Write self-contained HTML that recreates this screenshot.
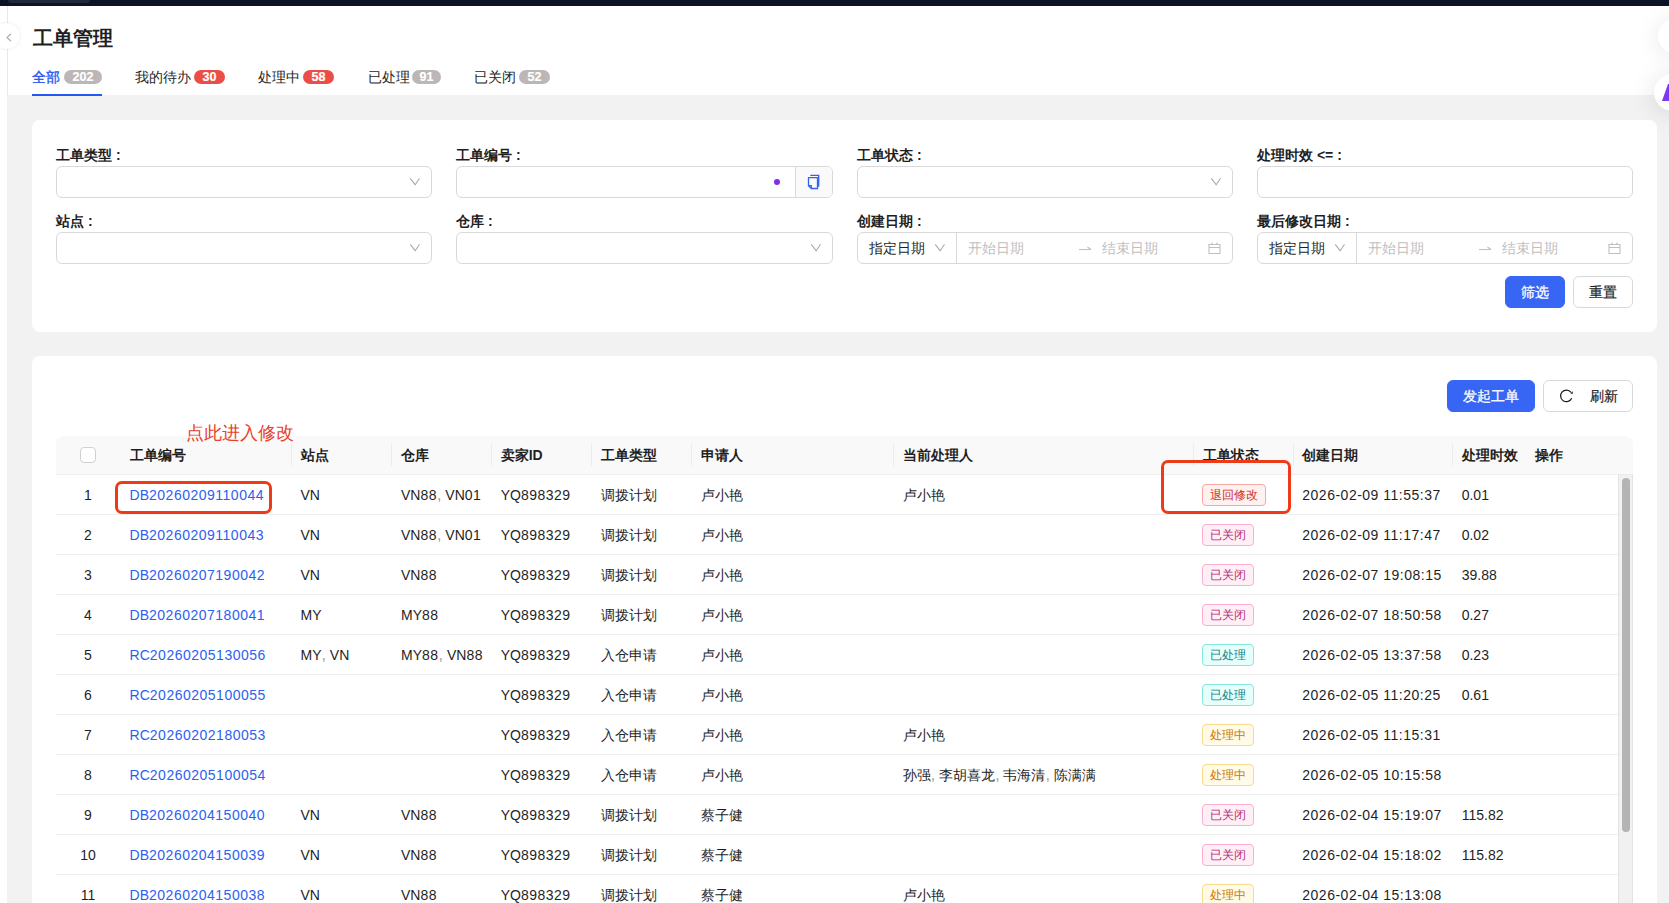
<!DOCTYPE html>
<html><head><meta charset="utf-8">
<style>
*{box-sizing:border-box;margin:0;padding:0}
html,body{width:1669px;height:903px;overflow:hidden;background:#fff;font-family:"Liberation Sans",sans-serif;color:#1f1f1f}
.abs{position:absolute}
#topbar{left:0;top:0;width:1669px;height:6px;background:#0a1426}
#toptab{left:8px;top:0;width:82px;height:3px;background:#1f2938;border-radius:0 0 4px 4px}
#vline{left:7px;top:6px;width:1px;height:89px;background:#e8e8e8}
#gray{left:7px;top:95px;width:1662px;height:808px;background:#f2f2f2}
#collapse{left:-6px;top:22.5px;width:26px;height:26px;border-radius:50%;background:#fff;box-shadow:0 0 3px rgba(0,0,0,.10)}
#collapse svg{position:absolute;left:12px;top:10px}
.title{left:33px;top:25px;font-size:20px;font-weight:bold;color:#1f1f1f;line-height:26px}
.tab{top:68px;font-size:14px;line-height:18px;color:#262626;white-space:nowrap}
.tab.on{color:#2458f5;-webkit-text-stroke:0.35px #2458f5}
.badge{top:70px;height:14px;line-height:14px;border-radius:7px;color:#fff;font-size:12.5px;font-weight:bold;text-align:center;-webkit-text-stroke:0.2px #fff}
.bg{background:#bcb6b6}.br{background:#ea4e46}
#uline{left:32px;top:94px;width:70px;height:2px;background:#2458f5}
.card{background:#fff;border-radius:8px}
#card1{left:32px;top:120px;width:1625px;height:212px}
#card2{left:32px;top:356px;width:1625px;height:560px}
.lbl{font-size:14px;font-weight:bold;line-height:16px;color:#1f1f1f;white-space:nowrap}
.inp{height:32px;width:376px;border:1px solid #d9d9d9;border-radius:6px;background:#fff}
.chev{position:absolute;right:10px;top:10px}
.btn{height:32px;border-radius:6px;font-size:14px;line-height:30px;text-align:center;white-space:nowrap}
.btnp{background:#3766f4;color:#fff;border:1px solid #3766f4;-webkit-text-stroke:0.3px #fff}
.btnd{background:#fff;color:#1f1f1f;border:1px solid #d9d9d9;-webkit-text-stroke:0.2px #1f1f1f}
.ph{position:absolute;top:7px;font-size:14px;line-height:16px;color:#bfbfbf;white-space:nowrap}
.seltxt{position:absolute;top:7px;left:11px;font-size:14px;line-height:16px;color:#1f1f1f;white-space:nowrap}
.thead{left:56px;top:436px;width:1577px;height:39px;background:#f9f9f9;border-radius:8px 8px 0 0;border-bottom:1px solid #efefef}
.cb{left:80px;top:447px;width:16px;height:16px;border:1px solid #d0d0d0;border-radius:4px;background:#fff}
.th{top:446px;font-size:14px;font-weight:bold;line-height:18px;color:#1f1f1f;white-space:nowrap}
.td{font-size:14px;line-height:18px;color:#1f1f1f;white-space:nowrap}
.idx{left:56px;width:64px;text-align:center}
.link{color:#2c60f2}
.cm{color:#a0a0a0;font-size:16px;line-height:0}
.sep{top:444px;width:1px;height:22px;background:#ececec}
.rowline{left:56px;width:1562px;height:1px;background:#efefef}
.tag{height:22px;line-height:20px;font-size:12px;border-radius:4px;border:1px solid;padding:0 7px;white-space:nowrap}
.t-red{color:#cc2f2b;background:#fff1f0;border-color:#f7a8a3}
.t-mag{color:#b82c7c;background:#fff0f6;border-color:#ffadd2}
.t-cyan{color:#17838b;background:#e6fffb;border-color:#87e8de}
.t-gold{color:#c47a12;background:#fffbe6;border-color:#f8da8c}
#sbtrack{left:1618px;top:474px;width:15px;height:429px;background:#f1f1f1;border-left:1px solid #e3e3e3;border-right:1px solid #e3e3e3;border-top:1px solid #ececec}
#sbthumb{left:1622px;top:478px;width:8px;height:354px;background:#b4b4b4;border-radius:4px}
#box1{left:115px;top:481px;width:157px;height:33px;border:3px solid #ee3a17;border-radius:7px}
#box2{left:1161px;top:460px;width:130px;height:54px;border:3px solid #ee3a17;border-radius:7px}
#note{left:185.5px;top:422px;font-size:18.2px;line-height:22px;color:#e8402a;white-space:nowrap}
#fab1{left:1658px;top:18px;width:36px;height:36px;border-radius:50%;background:#fff;box-shadow:0 2px 24px rgba(0,0,0,.10)}
#fab2{left:1654px;top:74px;width:37px;height:37px;border-radius:50%;background:#fff;box-shadow:0 2px 26px rgba(0,0,0,.13)}
#botline{display:none}
.dg{letter-spacing:0.5px}
.co{margin-left:4px}

</style></head>
<body>
<div id="topbar" class="abs"></div>
<div id="toptab" class="abs"></div>
<div id="vline" class="abs"></div>
<div id="gray" class="abs"></div>
<div id="collapse" class="abs"><svg width="6" height="9" viewBox="0 0 6 9"><path d="M5 0.8 L1 4.5 L5 8.2" fill="none" stroke="#b0b0b0" stroke-width="1.2"/></svg></div>
<div class="abs title">工单管理</div>
<div class="abs tab on" style="left:32px">全部</div>
<div class="abs badge bg" style="left:64px;width:38px">202</div>
<div class="abs tab" style="left:134.7px">我的待办</div>
<div class="abs badge br" style="left:194px;width:31px">30</div>
<div class="abs tab" style="left:257.6px">处理中</div>
<div class="abs badge br" style="left:303px;width:31px">58</div>
<div class="abs tab" style="left:367.5px">已处理</div>
<div class="abs badge bg" style="left:412px;width:29px">91</div>
<div class="abs tab" style="left:474.3px">已关闭</div>
<div class="abs badge bg" style="left:519px;width:31px">52</div>
<div id="uline" class="abs"></div>

<div id="card1" class="abs card"></div>
<div class="abs lbl" style="left:56px;top:147px">工单类型<span class="co">:</span></div>
<div class="abs inp" style="left:56px;top:166px"><svg class="chev" width="12" height="9" viewBox="0 0 12 9"><path d="M1.2 1.3 L6.2 7.7 L10.5 1.3" fill="none" stroke="#adadad" stroke-width="1.1"/></svg></div>
<div class="abs lbl" style="left:456px;top:147px">工单编号<span class="co">:</span></div>
<div class="abs inp" style="left:456px;top:166px;width:377px;overflow:hidden">
  <div style="position:absolute;left:317px;top:12px;width:6px;height:6px;border-radius:50%;background:#7a2ff0"></div>
  <div style="position:absolute;left:338px;top:0;width:37px;height:30px;background:#fafafa;border-left:1px solid #d9d9d9"></div>
</div>
<svg class="abs" style="left:806px;top:173px" width="16" height="18" viewBox="0 0 16 18"><path d="M4.3 2.4 H12.7 V13.7" fill="none" stroke="#3062f5" stroke-width="1.3"/><path d="M2.5 4.6 H11.5 V15.5 H5.3 L2.5 12.7 Z M2.5 12.7 H5.3 V15.5" fill="none" stroke="#3062f5" stroke-width="1.3" stroke-linejoin="round"/></svg>
<div class="abs lbl" style="left:857px;top:147px">工单状态<span class="co">:</span></div>
<div class="abs inp" style="left:857px;top:166px"><svg class="chev" width="12" height="9" viewBox="0 0 12 9"><path d="M1.2 1.3 L6.2 7.7 L10.5 1.3" fill="none" stroke="#adadad" stroke-width="1.1"/></svg></div>
<div class="abs lbl" style="left:1257px;top:147px">处理时效 &lt;=<span class="co">:</span></div>
<div class="abs inp" style="left:1257px;top:166px"></div>

<div class="abs lbl" style="left:56px;top:213px">站点<span class="co">:</span></div>
<div class="abs inp" style="left:56px;top:232px"><svg class="chev" width="12" height="9" viewBox="0 0 12 9"><path d="M1.2 1.3 L6.2 7.7 L10.5 1.3" fill="none" stroke="#adadad" stroke-width="1.1"/></svg></div>
<div class="abs lbl" style="left:456px;top:213px">仓库<span class="co">:</span></div>
<div class="abs inp" style="left:456px;top:232px;width:377px"><svg class="chev" width="12" height="9" viewBox="0 0 12 9"><path d="M1.2 1.3 L6.2 7.7 L10.5 1.3" fill="none" stroke="#adadad" stroke-width="1.1"/></svg></div>
<div class="abs lbl" style="left:857px;top:213px">创建日期<span class="co">:</span></div>
<div class="abs inp" style="left:857px;top:232px">
  <div class="seltxt">指定日期</div>
  <svg style="position:absolute;left:76px;top:10px" width="12" height="9" viewBox="0 0 12 9"><path d="M1.2 1.3 L6.2 7.7 L10.5 1.3" fill="none" stroke="#adadad" stroke-width="1.1"/></svg>
  <div style="position:absolute;left:98px;top:0;width:1px;height:30px;background:#d9d9d9"></div>
  <div class="ph" style="left:110px">开始日期</div>
  <svg style="position:absolute;left:221px;top:13px" width="13" height="6" viewBox="0 0 13 6"><path d="M0 3.5 H12 M8.5 1 L12 3.5" fill="none" stroke="#bfbfbf" stroke-width="1.1"/></svg>
  <div class="ph" style="left:244px">结束日期</div>
  <svg style="position:absolute;left:350px;top:9px" width="13" height="13" viewBox="0 0 13 13"><path d="M1 2.5 H12 V11.5 H1 Z M1 5.5 H12 M4 0.5 V3 M9 0.5 V3" fill="none" stroke="#bfbfbf" stroke-width="1.1"/></svg>
</div>
<div class="abs lbl" style="left:1257px;top:213px">最后修改日期<span class="co">:</span></div>
<div class="abs inp" style="left:1257px;top:232px">
  <div class="seltxt">指定日期</div>
  <svg style="position:absolute;left:76px;top:10px" width="12" height="9" viewBox="0 0 12 9"><path d="M1.2 1.3 L6.2 7.7 L10.5 1.3" fill="none" stroke="#adadad" stroke-width="1.1"/></svg>
  <div style="position:absolute;left:98px;top:0;width:1px;height:30px;background:#d9d9d9"></div>
  <div class="ph" style="left:110px">开始日期</div>
  <svg style="position:absolute;left:221px;top:13px" width="13" height="6" viewBox="0 0 13 6"><path d="M0 3.5 H12 M8.5 1 L12 3.5" fill="none" stroke="#bfbfbf" stroke-width="1.1"/></svg>
  <div class="ph" style="left:244px">结束日期</div>
  <svg style="position:absolute;left:350px;top:9px" width="13" height="13" viewBox="0 0 13 13"><path d="M1 2.5 H12 V11.5 H1 Z M1 5.5 H12 M4 0.5 V3 M9 0.5 V3" fill="none" stroke="#bfbfbf" stroke-width="1.1"/></svg>
</div>
<div class="abs btn btnp" style="left:1505px;top:276px;width:60px">筛选</div>
<div class="abs btn btnd" style="left:1573px;top:276px;width:60px">重置</div>

<div id="card2" class="abs card"></div>
<div class="abs btn btnp" style="left:1447px;top:380px;width:88px">发起工单</div>
<div class="abs btn btnd" style="left:1543px;top:380px;width:90px"><span style="position:absolute;left:46px;top:0">刷新</span></div>
<svg class="abs" style="left:1553px;top:383px" width="26" height="26" viewBox="0 0 26 26"><path d="M18 9.3 A5.8 5.8 0 1 0 18.7 15.2" fill="none" stroke="#1f1f1f" stroke-width="1.25"/><path d="M17.3 10.2 L20 8.2 L19.6 10.9 Z" fill="#1f1f1f"/></svg>

<div class="abs thead"></div>
<div class="abs cb"></div>
<div class="abs th" style="left:129.6px">工单编号</div>
<div class="abs th" style="left:300.5px">站点</div>
<div class="abs th" style="left:401.0px">仓库</div>
<div class="abs th" style="left:500.7px">卖家ID</div>
<div class="abs th" style="left:600.8px">工单类型</div>
<div class="abs th" style="left:700.9px">申请人</div>
<div class="abs th" style="left:902.8px">当前处理人</div>
<div class="abs th" style="left:1203.4px">工单状态</div>
<div class="abs th" style="left:1302.3px">创建日期</div>
<div class="abs th" style="left:1461.7px">处理时效</div>
<div class="abs th" style="left:1534.6px">操作</div>
<div class="abs sep" style="left:291px"></div>
<div class="abs sep" style="left:391px"></div>
<div class="abs sep" style="left:491px"></div>
<div class="abs sep" style="left:591px"></div>
<div class="abs sep" style="left:691px"></div>
<div class="abs sep" style="left:893px"></div>
<div class="abs sep" style="left:1193px"></div>
<div class="abs sep" style="left:1293px"></div>
<div class="abs sep" style="left:1452px"></div>
<div class="abs td idx" style="top:486px">1</div>
<div class="abs td link" style="left:129.6px;top:486px">DB<span class="dg">20260209110044</span></div>
<div class="abs td" style="left:300.5px;top:486px">VN</div>
<div class="abs td" style="left:401.0px;top:486px">VN<span class="dg">88</span><span class="cm">,</span> VN<span class="dg">01</span></div>
<div class="abs td" style="left:500.7px;top:486px">YQ<span class="dg">898329</span></div>
<div class="abs td" style="left:600.8px;top:486px">调拨计划</div>
<div class="abs td" style="left:700.9px;top:486px">卢小艳</div>
<div class="abs td" style="left:902.8px;top:486px">卢小艳</div>
<div class="abs tag t-red" style="left:1202px;top:484px">退回修改</div>
<div class="abs td dg" style="left:1302.3px;top:486px">2026-02-09 11:55:37</div>
<div class="abs td" style="left:1461.7px;top:486px">0.01</div>
<div class="abs rowline" style="top:514px"></div>
<div class="abs td idx" style="top:526px">2</div>
<div class="abs td link" style="left:129.6px;top:526px">DB<span class="dg">20260209110043</span></div>
<div class="abs td" style="left:300.5px;top:526px">VN</div>
<div class="abs td" style="left:401.0px;top:526px">VN<span class="dg">88</span><span class="cm">,</span> VN<span class="dg">01</span></div>
<div class="abs td" style="left:500.7px;top:526px">YQ<span class="dg">898329</span></div>
<div class="abs td" style="left:600.8px;top:526px">调拨计划</div>
<div class="abs td" style="left:700.9px;top:526px">卢小艳</div>
<div class="abs tag t-mag" style="left:1202px;top:524px">已关闭</div>
<div class="abs td dg" style="left:1302.3px;top:526px">2026-02-09 11:17:47</div>
<div class="abs td" style="left:1461.7px;top:526px">0.02</div>
<div class="abs rowline" style="top:554px"></div>
<div class="abs td idx" style="top:566px">3</div>
<div class="abs td link" style="left:129.6px;top:566px">DB<span class="dg">20260207190042</span></div>
<div class="abs td" style="left:300.5px;top:566px">VN</div>
<div class="abs td" style="left:401.0px;top:566px">VN<span class="dg">88</span></div>
<div class="abs td" style="left:500.7px;top:566px">YQ<span class="dg">898329</span></div>
<div class="abs td" style="left:600.8px;top:566px">调拨计划</div>
<div class="abs td" style="left:700.9px;top:566px">卢小艳</div>
<div class="abs tag t-mag" style="left:1202px;top:564px">已关闭</div>
<div class="abs td dg" style="left:1302.3px;top:566px">2026-02-07 19:08:15</div>
<div class="abs td" style="left:1461.7px;top:566px">39.88</div>
<div class="abs rowline" style="top:594px"></div>
<div class="abs td idx" style="top:606px">4</div>
<div class="abs td link" style="left:129.6px;top:606px">DB<span class="dg">20260207180041</span></div>
<div class="abs td" style="left:300.5px;top:606px">MY</div>
<div class="abs td" style="left:401.0px;top:606px">MY<span class="dg">88</span></div>
<div class="abs td" style="left:500.7px;top:606px">YQ<span class="dg">898329</span></div>
<div class="abs td" style="left:600.8px;top:606px">调拨计划</div>
<div class="abs td" style="left:700.9px;top:606px">卢小艳</div>
<div class="abs tag t-mag" style="left:1202px;top:604px">已关闭</div>
<div class="abs td dg" style="left:1302.3px;top:606px">2026-02-07 18:50:58</div>
<div class="abs td" style="left:1461.7px;top:606px">0.27</div>
<div class="abs rowline" style="top:634px"></div>
<div class="abs td idx" style="top:646px">5</div>
<div class="abs td link" style="left:129.6px;top:646px">RC<span class="dg">20260205130056</span></div>
<div class="abs td" style="left:300.5px;top:646px">MY<span class="cm">,</span> VN</div>
<div class="abs td" style="left:401.0px;top:646px">MY<span class="dg">88</span><span class="cm">,</span> VN<span class="dg">88</span></div>
<div class="abs td" style="left:500.7px;top:646px">YQ<span class="dg">898329</span></div>
<div class="abs td" style="left:600.8px;top:646px">入仓申请</div>
<div class="abs td" style="left:700.9px;top:646px">卢小艳</div>
<div class="abs tag t-cyan" style="left:1202px;top:644px">已处理</div>
<div class="abs td dg" style="left:1302.3px;top:646px">2026-02-05 13:37:58</div>
<div class="abs td" style="left:1461.7px;top:646px">0.23</div>
<div class="abs rowline" style="top:674px"></div>
<div class="abs td idx" style="top:686px">6</div>
<div class="abs td link" style="left:129.6px;top:686px">RC<span class="dg">20260205100055</span></div>
<div class="abs td" style="left:500.7px;top:686px">YQ<span class="dg">898329</span></div>
<div class="abs td" style="left:600.8px;top:686px">入仓申请</div>
<div class="abs td" style="left:700.9px;top:686px">卢小艳</div>
<div class="abs tag t-cyan" style="left:1202px;top:684px">已处理</div>
<div class="abs td dg" style="left:1302.3px;top:686px">2026-02-05 11:20:25</div>
<div class="abs td" style="left:1461.7px;top:686px">0.61</div>
<div class="abs rowline" style="top:714px"></div>
<div class="abs td idx" style="top:726px">7</div>
<div class="abs td link" style="left:129.6px;top:726px">RC<span class="dg">20260202180053</span></div>
<div class="abs td" style="left:500.7px;top:726px">YQ<span class="dg">898329</span></div>
<div class="abs td" style="left:600.8px;top:726px">入仓申请</div>
<div class="abs td" style="left:700.9px;top:726px">卢小艳</div>
<div class="abs td" style="left:902.8px;top:726px">卢小艳</div>
<div class="abs tag t-gold" style="left:1202px;top:724px">处理中</div>
<div class="abs td dg" style="left:1302.3px;top:726px">2026-02-05 11:15:31</div>
<div class="abs rowline" style="top:754px"></div>
<div class="abs td idx" style="top:766px">8</div>
<div class="abs td link" style="left:129.6px;top:766px">RC<span class="dg">20260205100054</span></div>
<div class="abs td" style="left:500.7px;top:766px">YQ<span class="dg">898329</span></div>
<div class="abs td" style="left:600.8px;top:766px">入仓申请</div>
<div class="abs td" style="left:700.9px;top:766px">卢小艳</div>
<div class="abs td" style="left:902.8px;top:766px">孙强<span class="cm">,</span> 李胡喜龙<span class="cm">,</span> 韦海清<span class="cm">,</span> 陈满满</div>
<div class="abs tag t-gold" style="left:1202px;top:764px">处理中</div>
<div class="abs td dg" style="left:1302.3px;top:766px">2026-02-05 10:15:58</div>
<div class="abs rowline" style="top:794px"></div>
<div class="abs td idx" style="top:806px">9</div>
<div class="abs td link" style="left:129.6px;top:806px">DB<span class="dg">20260204150040</span></div>
<div class="abs td" style="left:300.5px;top:806px">VN</div>
<div class="abs td" style="left:401.0px;top:806px">VN<span class="dg">88</span></div>
<div class="abs td" style="left:500.7px;top:806px">YQ<span class="dg">898329</span></div>
<div class="abs td" style="left:600.8px;top:806px">调拨计划</div>
<div class="abs td" style="left:700.9px;top:806px">蔡子健</div>
<div class="abs tag t-mag" style="left:1202px;top:804px">已关闭</div>
<div class="abs td dg" style="left:1302.3px;top:806px">2026-02-04 15:19:07</div>
<div class="abs td" style="left:1461.7px;top:806px">115.82</div>
<div class="abs rowline" style="top:834px"></div>
<div class="abs td idx" style="top:846px">10</div>
<div class="abs td link" style="left:129.6px;top:846px">DB<span class="dg">20260204150039</span></div>
<div class="abs td" style="left:300.5px;top:846px">VN</div>
<div class="abs td" style="left:401.0px;top:846px">VN<span class="dg">88</span></div>
<div class="abs td" style="left:500.7px;top:846px">YQ<span class="dg">898329</span></div>
<div class="abs td" style="left:600.8px;top:846px">调拨计划</div>
<div class="abs td" style="left:700.9px;top:846px">蔡子健</div>
<div class="abs tag t-mag" style="left:1202px;top:844px">已关闭</div>
<div class="abs td dg" style="left:1302.3px;top:846px">2026-02-04 15:18:02</div>
<div class="abs td" style="left:1461.7px;top:846px">115.82</div>
<div class="abs rowline" style="top:874px"></div>
<div class="abs td idx" style="top:886px">11</div>
<div class="abs td link" style="left:129.6px;top:886px">DB<span class="dg">20260204150038</span></div>
<div class="abs td" style="left:300.5px;top:886px">VN</div>
<div class="abs td" style="left:401.0px;top:886px">VN<span class="dg">88</span></div>
<div class="abs td" style="left:500.7px;top:886px">YQ<span class="dg">898329</span></div>
<div class="abs td" style="left:600.8px;top:886px">调拨计划</div>
<div class="abs td" style="left:700.9px;top:886px">蔡子健</div>
<div class="abs td" style="left:902.8px;top:886px">卢小艳</div>
<div class="abs tag t-gold" style="left:1202px;top:884px">处理中</div>
<div class="abs td dg" style="left:1302.3px;top:886px">2026-02-04 15:13:08</div>
<div class="abs rowline" style="top:914px"></div>
<div class="abs" id="sbtrack"></div>
<div class="abs" id="sbthumb"></div>
<div class="abs" id="box1"></div>
<div class="abs" id="box2"></div>
<div class="abs" id="note">点此进入修改</div>
<div class="abs" id="fab1"></div>
<div class="abs" id="fab2"></div>
<svg class="abs" style="left:1650px;top:80px" width="19" height="24" viewBox="0 0 19 24"><path d="M12 21 L18 4 L19 4 L19 21 Z" fill="#7b3af2"/></svg>
<div class="abs" id="botline"></div>
</body></html>
